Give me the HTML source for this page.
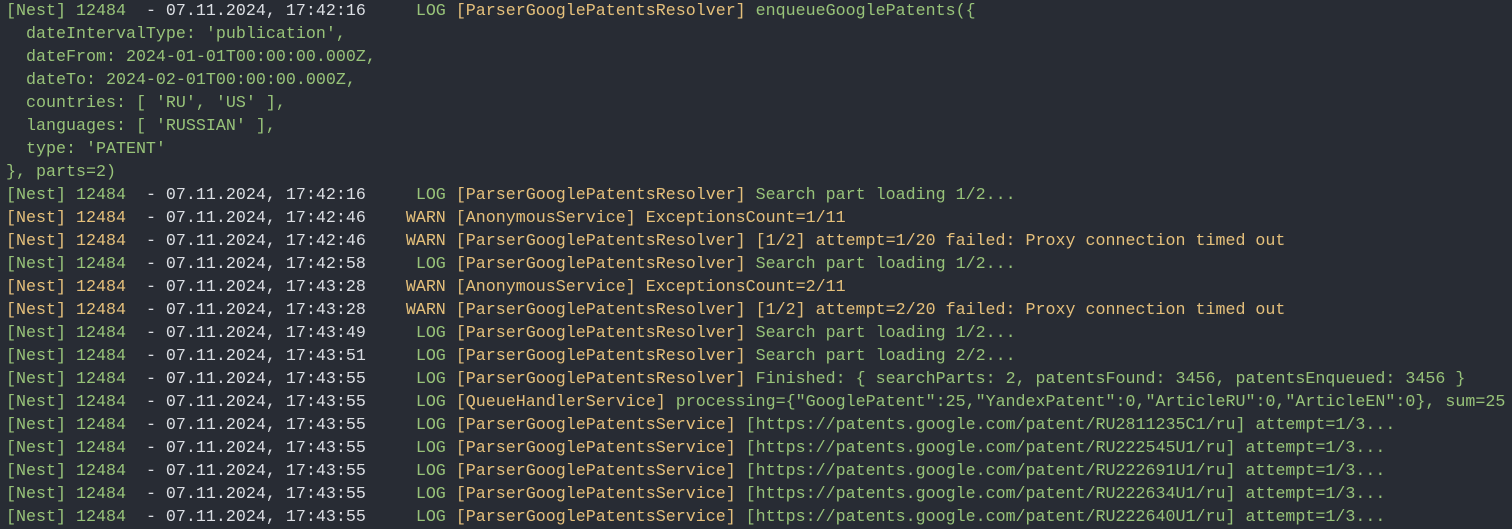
<!DOCTYPE html>
<html><head><meta charset="utf-8"><style>
html,body{margin:0;padding:0;background:#282c34;width:1512px;height:529px;overflow:hidden}
pre{margin:0;padding:0 0 0 6px;font-family:"Liberation Mono","DejaVu Sans Mono",monospace;font-size:16.667px;line-height:23px;color:#98c379;white-space:pre}
.w{color:#dcdfe4}.y{color:#e5c07b}.g{color:#98c379}
</style></head><body><pre><span class="g">[Nest] 12484  </span><span class="w">- 07.11.2024, 17:42:16</span><span class="g">     LOG </span><span class="y">[ParserGooglePatentsResolver]</span><span class="g"> enqueueGooglePatents({
  dateIntervalType: 'publication',
  dateFrom: 2024-01-01T00:00:00.000Z,
  dateTo: 2024-02-01T00:00:00.000Z,
  countries: [ 'RU', 'US' ],
  languages: [ 'RUSSIAN' ],
  type: 'PATENT'
}, parts=2)</span>
<span class="g">[Nest] 12484  </span><span class="w">- 07.11.2024, 17:42:16</span><span class="g">     LOG </span><span class="y">[ParserGooglePatentsResolver]</span><span class="g"> Search part loading 1/2...</span>
<span class="y">[Nest] 12484  </span><span class="w">- 07.11.2024, 17:42:46</span><span class="y">    WARN [AnonymousService] ExceptionsCount=1/11</span>
<span class="y">[Nest] 12484  </span><span class="w">- 07.11.2024, 17:42:46</span><span class="y">    WARN [ParserGooglePatentsResolver] [1/2] attempt=1/20 failed: Proxy connection timed out</span>
<span class="g">[Nest] 12484  </span><span class="w">- 07.11.2024, 17:42:58</span><span class="g">     LOG </span><span class="y">[ParserGooglePatentsResolver]</span><span class="g"> Search part loading 1/2...</span>
<span class="y">[Nest] 12484  </span><span class="w">- 07.11.2024, 17:43:28</span><span class="y">    WARN [AnonymousService] ExceptionsCount=2/11</span>
<span class="y">[Nest] 12484  </span><span class="w">- 07.11.2024, 17:43:28</span><span class="y">    WARN [ParserGooglePatentsResolver] [1/2] attempt=2/20 failed: Proxy connection timed out</span>
<span class="g">[Nest] 12484  </span><span class="w">- 07.11.2024, 17:43:49</span><span class="g">     LOG </span><span class="y">[ParserGooglePatentsResolver]</span><span class="g"> Search part loading 1/2...</span>
<span class="g">[Nest] 12484  </span><span class="w">- 07.11.2024, 17:43:51</span><span class="g">     LOG </span><span class="y">[ParserGooglePatentsResolver]</span><span class="g"> Search part loading 2/2...</span>
<span class="g">[Nest] 12484  </span><span class="w">- 07.11.2024, 17:43:55</span><span class="g">     LOG </span><span class="y">[ParserGooglePatentsResolver]</span><span class="g"> Finished: { searchParts: 2, patentsFound: 3456, patentsEnqueued: 3456 }</span>
<span class="g">[Nest] 12484  </span><span class="w">- 07.11.2024, 17:43:55</span><span class="g">     LOG </span><span class="y">[QueueHandlerService]</span><span class="g"> processing={"GooglePatent":25,"YandexPatent":0,"ArticleRU":0,"ArticleEN":0}, sum=25</span>
<span class="g">[Nest] 12484  </span><span class="w">- 07.11.2024, 17:43:55</span><span class="g">     LOG </span><span class="y">[ParserGooglePatentsService]</span><span class="g"> [https://patents.google.com/patent/RU2811235C1/ru] attempt=1/3...</span>
<span class="g">[Nest] 12484  </span><span class="w">- 07.11.2024, 17:43:55</span><span class="g">     LOG </span><span class="y">[ParserGooglePatentsService]</span><span class="g"> [https://patents.google.com/patent/RU222545U1/ru] attempt=1/3...</span>
<span class="g">[Nest] 12484  </span><span class="w">- 07.11.2024, 17:43:55</span><span class="g">     LOG </span><span class="y">[ParserGooglePatentsService]</span><span class="g"> [https://patents.google.com/patent/RU222691U1/ru] attempt=1/3...</span>
<span class="g">[Nest] 12484  </span><span class="w">- 07.11.2024, 17:43:55</span><span class="g">     LOG </span><span class="y">[ParserGooglePatentsService]</span><span class="g"> [https://patents.google.com/patent/RU222634U1/ru] attempt=1/3...</span>
<span class="g">[Nest] 12484  </span><span class="w">- 07.11.2024, 17:43:55</span><span class="g">     LOG </span><span class="y">[ParserGooglePatentsService]</span><span class="g"> [https://patents.google.com/patent/RU222640U1/ru] attempt=1/3...</span></pre></body></html>
